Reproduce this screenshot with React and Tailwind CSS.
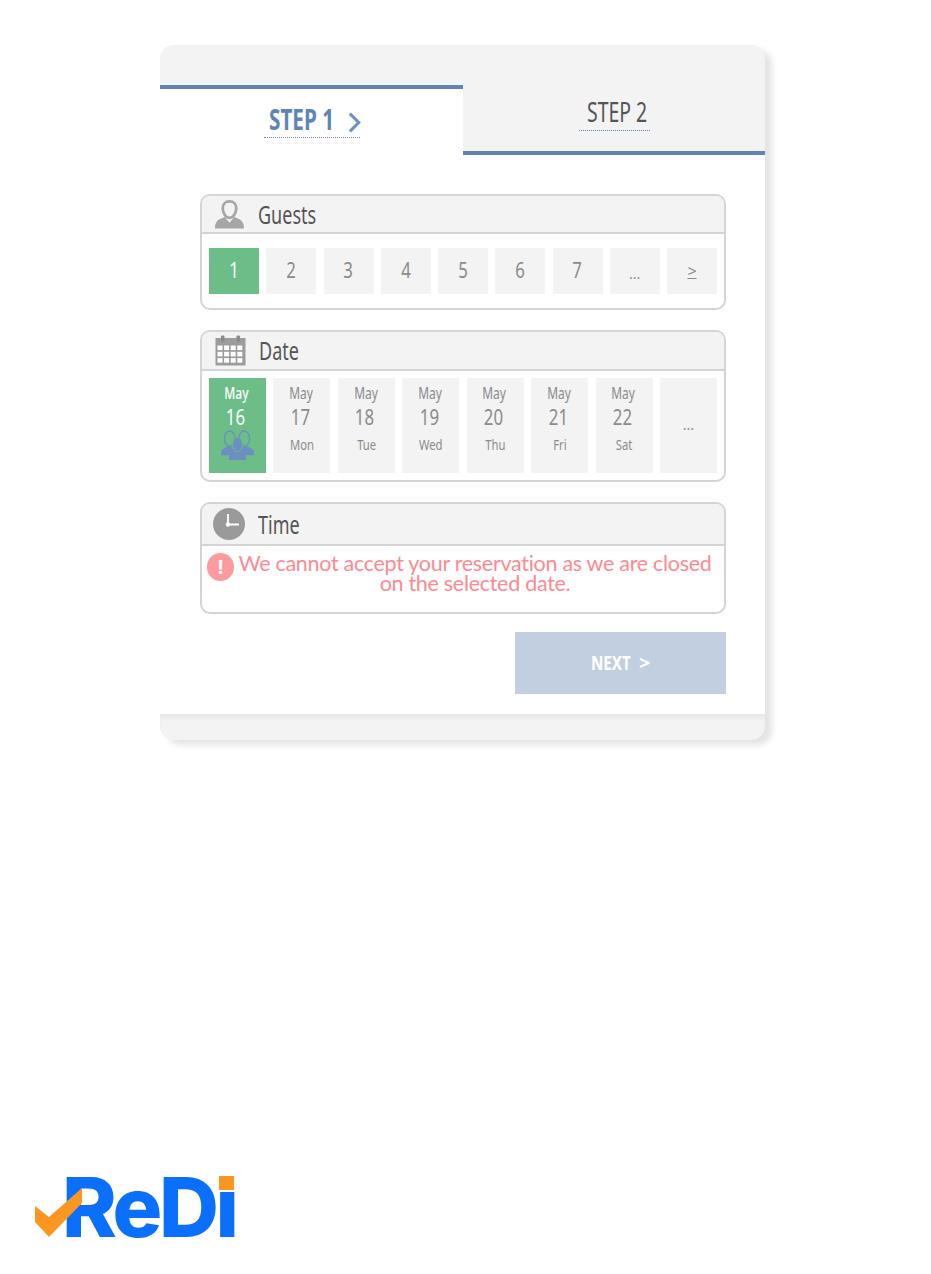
function PersonIcon({ className, fill = "#a6a6a6" }) {
  return (
    <svg viewBox="0 0 30 30" className={className}>
      <path fill={fill} d="M0 29.500 C0 24 2 21 6 19.500 L10 17.500 L15 23.500 L20 17.500 L24 19.500 C28 21 30 24 30 29.500 Z" />
      <path fill="none" stroke={fill} strokeWidth="2.800" d="M15 1.500 C10.500 1.500 8 4.500 8 8.500 C8 13 11 18.500 15 18.500 C19 18.500 22 13 22 8.500 C22 4.500 19.500 1.500 15 1.500 Z" />
    </svg>
  );
}

function CalendarIcon() {
  const cells = [];
  for (let r = 0; r < 3; r++) {
    for (let c = 0; c < 4; c++) {
      cells.push(<rect key={`${r}-${c}`} x={2.500 + c * 6.600} y={10.500 + r * 6.300} width="5" height="4.600" fill="#fff" />);
    }
  }
  return (
    <svg viewBox="0 0 31 31" className="w-[31px] h-[31px] shrink-0">
      <rect x="0.500" y="3" width="30" height="27.500" fill="#9c9c9c" />
      <rect x="6" y="0.500" width="3.500" height="6" rx="1" fill="#8a8a8a" />
      <rect x="21.500" y="0.500" width="3.500" height="6" rx="1" fill="#8a8a8a" />
      {cells}
    </svg>
  );
}

function ClockIcon() {
  return (
    <svg viewBox="0 0 32 32" className="w-[32px] h-[32px] shrink-0">
      <circle cx="16" cy="16" r="16" fill="#9a9a9a" />
      <path d="M15 6 V16.500 H26" fill="none" stroke="#fff" strokeWidth="1.800" />
      <circle cx="15" cy="16.500" r="2.200" fill="#fff" />
    </svg>
  );
}

function GroupIcon() {
  return (
    <svg viewBox="0 0 34 32" className="w-[33px] h-[31px] mt-[1px]">
      <g fill="#6a8fc0">
        <path d="M0 24 C0 20 3 18.500 7 17 L14 17 L14 26 L0 26 Z" />
        <path d="M34 24 C34 20 31 18.500 27 17 L20 17 L20 26 L34 26 Z" />
        <path d="M8 31 C8 25 12 23 17 21 C22 23 26 25 26 31 Z" />
      </g>
      <g fill="none" stroke="#6a8fc0" strokeWidth="1.400">
        <ellipse cx="9" cy="9" rx="5.500" ry="8" />
        <ellipse cx="24" cy="9" rx="5.500" ry="8" />
      </g>
      <ellipse cx="17" cy="15" rx="5" ry="7.500" fill="#6a8fc0" stroke="#6db985" strokeWidth="1" />
    </svg>
  );
}

function Panel({ icon, title, titleClass, headerClass, children, bodyClass }) {
  return (
    <section className={`border-2 border-[#d4d4d4] rounded-[10px] overflow-hidden ${bodyClass}`}>
      <div className={`flex items-center bg-[#f3f3f3] border-b-2 border-[#d4d4d4] ${headerClass}`}>
        {icon}
        <span className={`inline-block origin-left scale-x-[0.72] whitespace-nowrap text-[25px] leading-none text-[#555] ${titleClass}`}>{title}</span>
      </div>
      {children}
    </section>
  );
}

const guests = ["1", "2", "3", "4", "5", "6", "7"];
const days = [
  ["May", "16", ""],
  ["May", "17", "Mon"],
  ["May", "18", "Tue"],
  ["May", "19", "Wed"],
  ["May", "20", "Thu"],
  ["May", "21", "Fri"],
  ["May", "22", "Sat"],
];

export default function App() {
  return (
    <div className="bg-white w-[931px] h-[1274px] overflow-hidden pt-[45px] pl-[160px] font-['Noto_Sans',sans-serif]">
      <div className="w-[605px] h-[695px] rounded-[14px] overflow-hidden bg-[#f3f3f3] shadow-[7px_5px_6px_#e4e4e4] flex flex-col">
        <div className="h-[40px] shrink-0" />
        <div className="flex h-[70px] shrink-0">
          <div className="w-[303px] bg-white border-t-4 border-[#5d84b6] flex justify-center pt-[15px]">
            <div className="w-[96px] h-[34px] border-b border-dotted border-[#5d84b6] flex items-start pl-[5px]">
              <span className="inline-block w-[79px] origin-left scale-x-[0.74] whitespace-nowrap text-[28px] leading-[31px] font-bold text-[#5d84b6]">STEP 1</span>
              <svg viewBox="0 0 14 22" className="w-[13px] h-[21px] mt-[8px] shrink-0">
                <path d="M2 1.500 L11.500 11 L2 20.500" fill="none" stroke="#6f93c0" strokeWidth="3.400" />
              </svg>
            </div>
          </div>
          <div className="w-[302px] border-b-4 border-[#5d84b6] flex justify-center pt-[11px]">
            <div className="w-[71px] h-[35px] border-b border-dotted border-[#5d84b6] pl-[8px]">
              <span className="inline-block origin-left scale-x-[0.72] whitespace-nowrap text-[27px] leading-[31px] text-[#555]">STEP 2</span>
            </div>
          </div>
        </div>
        <div className="bg-white h-[559px] shrink-0 pl-[40px] pr-[39px] pt-[39px] flex flex-col">
          <Panel
            title="Guests"
            titleClass="ml-[14px]"
            headerClass="h-[38px] pl-[13px]"
            bodyClass="h-[116px]"
            icon={<PersonIcon className="w-[29px] h-[29px] shrink-0" />}
          >
            <div className="flex gap-[7.250px] px-[7px] pt-[14px]">
              {guests.map((g, i) => (
                <div
                  key={g}
                  className={`w-[50px] h-[46px] flex items-center justify-center pb-[1px] text-[21px] ${i === 0 ? "bg-[#6cbd88] text-white" : "bg-[#f3f3f3] text-[#8b8b8b]"}`}
                >
                  <span className="inline-block scale-x-[0.8]">{g}</span>
                </div>
              ))}
              <div className="w-[50px] h-[46px] flex items-center justify-center pt-[4px] text-[14px] bg-[#f3f3f3] text-[#8b8b8b]">...</div>
              <div className="w-[50px] h-[46px] flex items-center justify-center text-[16px] underline bg-[#f3f3f3] text-[#8b8b8b]">&gt;</div>
            </div>
          </Panel>
          <div className="h-[20px] shrink-0" />
          <Panel
            title="Date"
            titleClass="ml-[13px]"
            headerClass="h-[39px] pl-[13px]"
            bodyClass="h-[152px]"
            icon={<CalendarIcon />}
          >
            <div className="flex gap-[7.430px] px-[7px] pt-[7px]">
              {days.map(([m, d, w], i) => (
                <div
                  key={d}
                  className={`w-[57px] h-[95px] flex flex-col items-center ${i === 0 ? "bg-[#6cbd88] text-white" : "bg-[#f3f3f3] text-[#8b8b8b]"}`}
                >
                  <span className={`inline-block scale-x-[0.75] pr-[2px] text-[16px] leading-[20px] mt-[5px] ${i === 0 ? "font-medium" : ""}`}>{m}</span>
                  <span className="inline-block scale-x-[0.8] pr-[4px] text-[21px] leading-[24px] mt-[2px]">{d}</span>
                  {i === 0 ? <GroupIcon /> : <span className="inline-block scale-x-[0.75] text-[15px] leading-[20px] mt-[5px]">{w}</span>}
                </div>
              ))}
              <div className="w-[57px] h-[95px] bg-[#f3f3f3] text-[#8b8b8b] text-[14px] flex items-center justify-center pb-[3px]">...</div>
            </div>
          </Panel>
          <div className="h-[20px] shrink-0" />
          <Panel
            title="Time"
            titleClass="ml-[13px]"
            headerClass="h-[42px] pl-[11px]"
            bodyClass="h-[112px]"
            icon={<ClockIcon />}
          >
            <div className="flex items-start pl-[5px] pr-[8px] pt-[6px]">
              <div className="w-[27px] h-[28px] rounded-full bg-[#fd9a9e] text-white font-bold text-[20px] flex items-center justify-center shrink-0 mt-[1px]">!</div>
              <p className="flex-1 text-center font-['Lato',sans-serif] text-[21.500px] leading-[20px] text-[#fd8a90] tracking-[-0.290px] pt-[1px]">
                We cannot accept your reservation as we are closed on the selected date.
              </p>
            </div>
          </Panel>
          <div className="flex justify-end mt-[18px]">
            <div className="w-[211px] h-[62px] bg-[#c1cfe1] flex items-center pl-[76px] text-white font-bold text-[20px]">
              <span className="inline-block w-[48px] origin-left scale-x-[0.76]">NEXT</span>
              <span className="inline-block">&gt;</span>
            </div>
          </div>
        </div>
        <div className="h-[26px] shrink-0 shadow-[inset_0_5px_5px_-2px_#e6e6e6]" />
      </div>
      <div className="relative -ml-[125px] mt-[436px] w-[205px] h-[62px]">
        <span className="block font-['Inter',sans-serif] text-[#0a6ffb] font-extrabold text-[83px] leading-[62px] pl-[27px] tracking-[-3.500px]">ReDı</span>
        <span className="absolute left-[184px] top-0 w-[15px] h-[14px] bg-[#fb9720]" />
        <svg viewBox="0 0 48 50" className="absolute left-0 top-[12px] w-[48px] h-[50px]">
          <path d="M0 18 L14 29 L47 0 L47 15 L14 49 L0 34 Z" fill="#fb9720" />
        </svg>
      </div>
    </div>
  );
}
